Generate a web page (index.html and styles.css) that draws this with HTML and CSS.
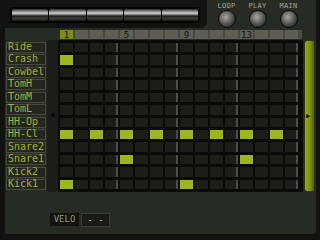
FILE: index.html
```html
<!DOCTYPE html>
<html lang="en">
<head>
  <meta charset="UTF-8">
  <title>Drum Sequencer</title>
  <link rel="stylesheet" href="styles.css">
</head>
<body>
  <div class="app">
    <!-- top: pattern buttons and knobs -->
    <div class="top">
      <div class="btnbar">
        <div class="btnframe">
          <div class="pbtn"></div>
          <div class="pbtn"></div>
          <div class="pbtn"></div>
          <div class="pbtn"></div>
          <div class="pbtn"></div>
        </div>
      </div>
      <div class="knobs">
        <div class="knob-group"><span class="knob-label">LOOP</span><div class="knob"></div></div>
        <div class="knob-group"><span class="knob-label">PLAY</span><div class="knob"></div></div>
        <div class="knob-group"><span class="knob-label">MAIN</span><div class="knob"></div></div>
      </div>
    </div>

    <!-- step numbers -->
    <div class="steps" id="steps"></div>

    <!-- sequencer body -->
    <div class="seq">
      <div class="labels" id="labels"></div>
      <div class="strip"><span class="arrow">&#9664;</span></div>
      <div class="grid" id="grid"></div>
      <div class="scroll"><span class="arrow">&#9654;</span></div>
    </div>

    <div class="bottom">
      <span class="velo-label">VELO</span>
      <span class="velo-value">- -</span>
    </div>
  </div>

  <script>
    const tracks = ['Ride', 'Crash', 'Cowbel', 'TomH', 'TomM', 'TomL', 'HH-Op', 'HH-Cl', 'Snare2', 'Snare1', 'Kick2', 'Kick1'];
    const pattern = {
      'Crash': [1],
      'HH-Cl': [1, 3, 5, 7, 9, 11, 13, 15],
      'Snare1': [5, 13],
      'Kick1': [1, 9]
    };

    // step header
    const steps = document.getElementById('steps');
    for (let i = 1; i <= 16; i++) {
      const s = document.createElement('div');
      s.className = 'step' + (i === 1 ? ' current' : '');
      if (i % 4 === 1) s.textContent = i;
      steps.appendChild(s);
    }

    // labels and cells
    const labels = document.getElementById('labels');
    const grid = document.getElementById('grid');
    tracks.forEach(name => {
      const l = document.createElement('div');
      l.className = 'label';
      l.textContent = name;
      labels.appendChild(l);
      for (let i = 1; i <= 16; i++) {
        const c = document.createElement('div');
        c.className = 'cell';
        if (i % 4 === 0) c.classList.add('beat');
        if ((pattern[name] || []).includes(i)) c.classList.add('on');
        grid.appendChild(c);
      }
    });
  </script>
</body>
</html>
```

FILE: styles.css
```css
body {
  margin: 0;
  background: #121210;
  font-family: "DejaVu Sans Mono", monospace;
}
.app {
  margin-left: 5px;
  width: 311px;
  height: 234px;
  background: #262b23;
  border-bottom-right-radius: 3px;
}
.top {
  display: flex;
  height: 28px;
}
.btnbar {
  width: 207px;
  margin-left: -5px;
  padding-left: 5px;
  background: #121210;
  border-bottom-right-radius: 6px;
  padding-top: 7px;
  box-sizing: border-box;
}
.btnframe {
  display: flex;
  gap: 1px;
  margin-left: 5px;
  width: 190px;
  height: 16px;
  padding: 2px;
  box-sizing: border-box;
  background: #050504;
  border-radius: 2px;
}
.pbtn {
  width: 37px;
  height: 12px;
  border-radius: 2px;
  background: linear-gradient(#2a2a28, #8c8c88 20%, #cfcfcb 35%, #7a7a76 48%, #1e1e1c 58%, #3c3c3a 78%, #1a1a18);
}
.knobs {
  display: flex;
  gap: 6px;
  padding-left: 7px;
}
.knob-group {
  display: flex;
  flex-direction: column;
  align-items: center;
  width: 25px;
}
.knob-label {
  font-size: 7px;
  line-height: 8px;
  margin-top: 2px;
  color: #a6a698;
  letter-spacing: 0.3px;
}
.knob {
  width: 16px;
  height: 16px;
  border-radius: 50%;
  border: 1px solid #0a0a0a;
  background: radial-gradient(circle at 42% 38%, #a8a8a4, #6e6e6a 35%, #3e3e3c 65%, #1c1c1a);
}
.steps {
  display: flex;
  gap: 2px;
  margin: 2px 0 0 55px;
  width: 242px;
  height: 9px;
  background: #4a4a43;
}
.step {
  width: 13px;
  height: 9px;
  background: #5e5e57;
  color: #111;
  font-size: 9px;
  line-height: 10px;
  text-align: center;
  white-space: nowrap;
}
.step.current {
  background: #7c8e12;
}
.seq {
  display: flex;
  margin-top: 1px;
  height: 152px;
}
.labels {
  display: grid;
  grid-template-rows: repeat(12, 1fr);
  row-gap: 1.5px;
  width: 40px;
  margin-left: 1px;
  padding-top: 2px;
  height: 148px;
}
.label {
  border: 1px solid #48483e;
  background: #25251e;
  color: #9fb43a;
  font-size: 10px;
  line-height: 8.5px;
  padding-left: 1px;
  white-space: nowrap;
}
.strip {
  position: relative;
  width: 11px;
  margin-left: 1px;
  background: #1b1e18;
  border-radius: 0 0 3px 3px;
}
.arrow {
  position: absolute;
  top: 72px;
  font-size: 7px;
  line-height: 7px;
  color: #060606;
}
.strip .arrow {
  left: 3px;
}
.grid {
  display: grid;
  grid-template-columns: repeat(16, 13px);
  grid-template-rows: repeat(12, 1fr);
  column-gap: 2px;
  row-gap: 3px;
  padding: 3px 5px 3px 2px;
  background: #0a0a08;
  height: 146px;
}
.cell {
  background: #1d1d17;
}
.cell.beat {
  border-right: 2px solid #4c4c45;
}
.cell.on {
  background: #9db520;
  border-right: none;
}
.scroll {
  position: relative;
  width: 9px;
  margin-left: 1px;
  background: linear-gradient(90deg, #96aa16, #7e8e0e 60%, #525d06);
  border: 1px solid #2e3410;
  border-radius: 3px;
}
.scroll .arrow {
  left: 1px;
  top: 72px;
  color: #1a1e06;
}
.bottom {
  display: flex;
  gap: 2px;
  margin: 21px 0 0 45px;
}
.velo-label {
  width: 29px;
  height: 13px;
  background: #121210;
  color: #8a9a70;
  font-size: 9px;
  line-height: 13px;
  text-align: center;
}
.velo-value {
  width: 27px;
  height: 12px;
  background: #1a1a16;
  border: 1px solid #3c3c35;
  color: #c4c4b4;
  font-size: 9px;
  line-height: 12px;
  text-align: center;
}
```
